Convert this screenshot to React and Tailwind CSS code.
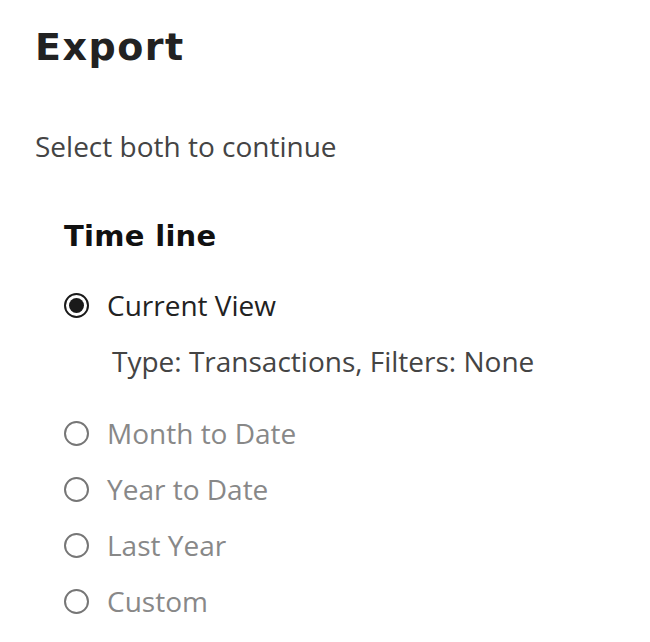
import React, { useState } from 'react';

const opciones = [
  { id: 'current', label: 'Current View' },
  { id: 'mtd', label: 'Month to Date' },
  { id: 'ytd', label: 'Year to Date' },
  { id: 'last', label: 'Last Year' },
  { id: 'custom', label: 'Custom' },
];

function Radio({ checked }) {
  return (
    <span className={`w-[25px] h-[25px] shrink-0 rounded-full border-2 flex items-center justify-center ${
      checked ? 'border-[#1a1a1a]' : 'border-[#767676]'
    }`}>
      {checked && <span className="w-[15px] h-[15px] rounded-full bg-[#1a1a1a]"></span>}
    </span>
  );
}

export default function App() {
  const [seleccion, setSeleccion] = useState('current');

  return (
    <div className="min-h-screen bg-white pt-[23px] pl-[35px]" style={{ fontFamily: '"Open Sans", sans-serif' }}>
      {/* cabecera */}
      <h1 className="text-[38px] leading-[48px] font-bold text-[#222] tracking-[0.04em]" style={{ fontFamily: '"DejaVu Sans", sans-serif' }}>
        Export
      </h1>
      <p className="mt-[57px] text-[28px] leading-[36px] text-[#444]">Select both to continue</p>

      <div className="pl-[29px]">
        <h2 className="mt-[52px] text-[29px] leading-[40px] font-bold text-[#111] tracking-[0.01em]" style={{ fontFamily: '"DejaVu Sans", sans-serif' }}>
          Time line
        </h2>

        {opciones.map((op, i) => {
          const activo = seleccion === op.id;
          return (
            <div key={op.id} className={i === 0 ? 'mt-[29px]' : i === 1 ? 'mt-[34px]' : 'mt-[16px]'}>
              <button
                onClick={() => setSeleccion(op.id)}
                className="h-[40px] flex items-center gap-[18px] cursor-pointer"
              >
                <Radio checked={activo} />
                <span className={`text-[28px] leading-[36px] ${activo ? 'text-[#222]' : 'text-[#888]'}`}>{op.label}</span>
              </button>
              {i === 0 && (
                <p className="mt-[18px] pl-[48px] text-[28px] leading-[36px] text-[#444]">
                  Type: Transactions, Filters: None
                </p>
              )}
            </div>
          );
        })}
      </div>
    </div>
  );
}
